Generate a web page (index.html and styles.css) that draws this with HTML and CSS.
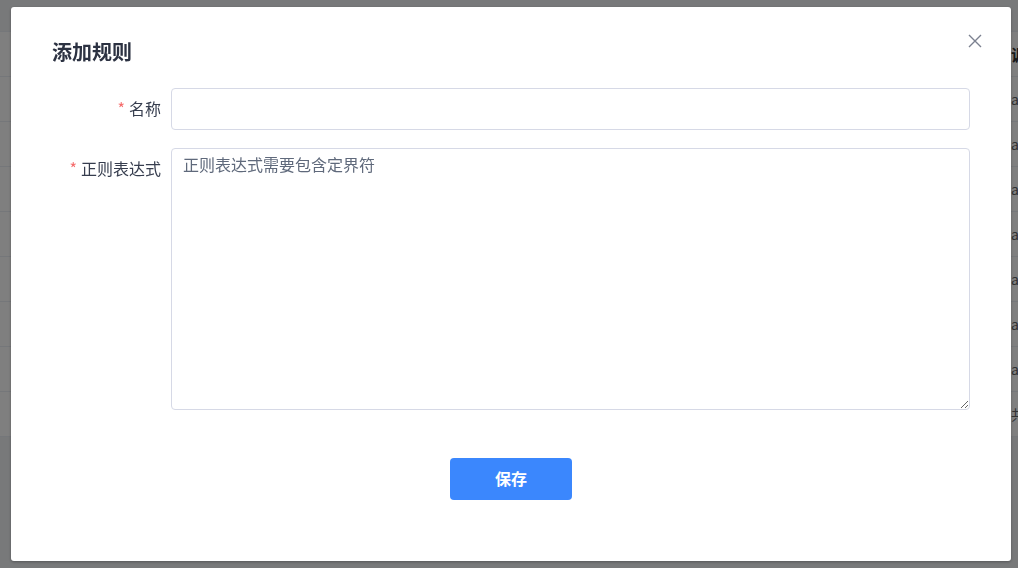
FILE: index.html
```html
<!DOCTYPE html>
<html lang="zh-CN">
<head>
    <meta charset="UTF-8">
    <meta name="viewport" content="width=device-width, initial-scale=1.0">
    <title>规则管理</title>
    <link rel="stylesheet" href="styles.css">
</head>
<body>
    <div class="page">
        <div class="toolbar"></div>
        <div class="table">
            <div class="row head"><span class="cell"></span><span class="cell">调试</span></div>
            <div class="row"><span class="cell"></span><span class="cell">admin</span></div>
            <div class="row"><span class="cell"></span><span class="cell">admin</span></div>
            <div class="row"><span class="cell"></span><span class="cell">admin</span></div>
            <div class="row"><span class="cell"></span><span class="cell">admin</span></div>
            <div class="row"><span class="cell"></span><span class="cell">admin</span></div>
            <div class="row"><span class="cell"></span><span class="cell">admin</span></div>
            <div class="row"><span class="cell"></span><span class="cell">admin</span></div>
            <div class="row"><span class="cell"></span><span class="cell">共享</span></div>
        </div>
    </div>

    <div class="mask"></div>

    <div class="dialog">
        <div class="dialog-header">
            <span class="dialog-title">添加规则</span>
            <button class="dialog-close" aria-label="关闭">
                <svg width="14" height="14" viewBox="0 0 14 14">
                    <path d="M1 1L13 13M13 1L1 13" stroke="#7b8190" stroke-width="1.4" fill="none"/>
                </svg>
            </button>
        </div>

        <form class="form">
            <div class="form-item">
                <label class="form-label required" for="rule-name">名称</label>
                <input type="text" id="rule-name" class="input">
            </div>
            <div class="form-item">
                <label class="form-label required" for="rule-regex">正则表达式</label>
                <textarea id="rule-regex" class="textarea" placeholder="正则表达式需要包含定界符"></textarea>
            </div>
        </form>

        <div class="dialog-footer">
            <button class="btn-primary">保存</button>
        </div>
    </div>
</body>
</html>
```

FILE: styles.css
```css
body {
    margin: 0;
    overflow: hidden;
    font-family: "Noto Sans CJK SC", "Noto Sans", sans-serif;
    background: #f0f2f5;
}
.page {
    width: 1018px;
    height: 568px;
}
.toolbar {
    height: 31px;
}
.table {
    background: #fff;
}
.row {
    display: grid;
    grid-template-columns: 1011px 1fr;
    height: 45px;
    border-bottom: 1px solid #ebeef5;
    box-sizing: border-box;
    align-items: center;
    font-size: 14px;
    color: #606266;
    white-space: nowrap;
}
.row.head {
    height: 46px;
    font-weight: bold;
    font-size: 16px;
    color: #303133;
}
.row:first-child {
    border-top: 1px solid #ebeef5;
}

.mask {
    position: fixed;
    inset: 0;
    background: rgba(0, 0, 0, 0.5);
}

.dialog {
    position: fixed;
    left: 11px;
    top: 7px;
    width: 1000px;
    box-sizing: border-box;
    padding: 31px 41px 61px;
    background: #fff;
    border-radius: 3px;
    box-shadow: 0 1px 3px rgba(0, 0, 0, 0.3);
}
.dialog-header {
    height: 28px;
    margin-bottom: 22px;
}
.dialog-title {
    font-size: 20px;
    line-height: 28px;
    font-weight: bold;
    color: #2c3242;
}
.dialog-close {
    position: absolute;
    top: 27px;
    right: 29px;
    width: 14px;
    height: 14px;
    padding: 0;
    border: none;
    background: none;
    cursor: pointer;
}
.dialog-close svg {
    display: block;
}

.form-item {
    display: flex;
    align-items: flex-start;
    margin-bottom: 18px;
}
.form-item:last-child {
    margin-bottom: 0;
}
.form-label {
    width: 119px;
    flex: none;
    box-sizing: border-box;
    padding-right: 10px;
    text-align: right;
    font-size: 16px;
    line-height: 40px;
    color: #363d4e;
}
.form-label.required::before {
    content: "*";
    color: #f56c6c;
    margin-right: 4px;
}
.input,
.textarea {
    flex: 1;
    box-sizing: border-box;
    border: 1px solid #d6d9e6;
    border-radius: 4px;
    font-family: inherit;
    font-size: 16px;
    color: #303133;
    outline: none;
    background: #fff;
}
.input {
    height: 42px;
    padding: 0 11px;
}
.textarea {
    height: 262px;
    padding: 3px 11px;
    line-height: 24px;
    resize: vertical;
}
.textarea::placeholder {
    color: #5f697b;
}

.dialog-footer {
    display: flex;
    justify-content: center;
    margin-top: 48px;
}
.btn-primary {
    width: 122px;
    height: 42px;
    padding: 0 0 2px;
    border: none;
    border-radius: 4px;
    background: #3b87fd;
    color: #fff;
    font-family: inherit;
    font-size: 16px;
    font-weight: bold;
    cursor: pointer;
}
```
